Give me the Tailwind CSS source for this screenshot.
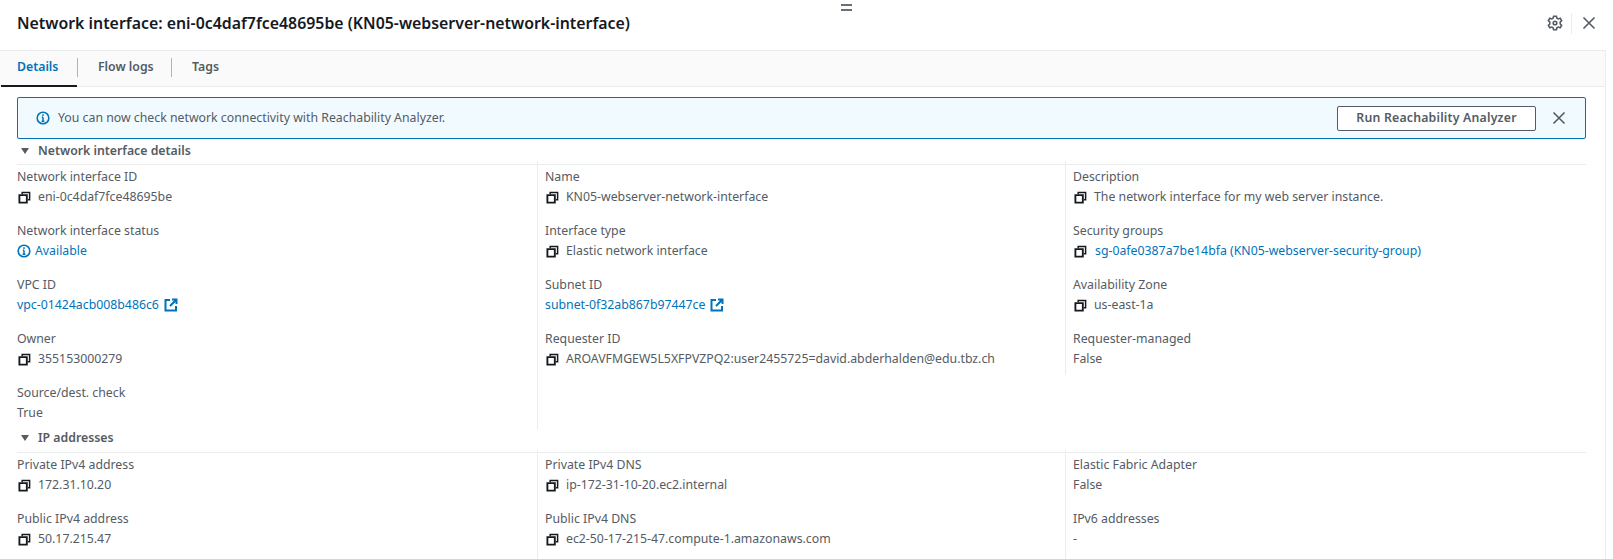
<!DOCTYPE html>
<html lang="en">
<head>
    <meta charset="UTF-8">
    <title>Network interface</title>
    <script src="https://cdn.jsdelivr.net/npm/@tailwindcss/browser@4"></script>
</head>
<body class="bg-white text-[#545b64] font-['Noto_Sans',sans-serif] text-[12.3px] leading-[20px] h-[559px] overflow-hidden">

    <svg class="hidden">
        <symbol id="copy" viewBox="0 0 14 14"><path d="M4.5 3.5V1.5H12.5V9.5H10.5" fill="none" stroke="currentColor" stroke-width="1.6"/><path d="M1.5 4.5H9.5V12.5H1.5Z" fill="none" stroke="currentColor" stroke-width="2"/></symbol>
        <symbol id="external" viewBox="0 0 14 14"><path d="M6 2H1.5V12.5H12V8M8 1.5H12.5V6M12.5 1.5L6 8" fill="none" stroke="currentColor" stroke-width="2"/></symbol>
        <symbol id="info" viewBox="0 0 14 14"><circle cx="7" cy="7" r="5.8" fill="none" stroke="currentColor" stroke-width="1.6"/><path d="M7 6.2V10.2M5.6 10.2H8.4M5.8 6.2H7" fill="none" stroke="currentColor" stroke-width="1.5"/><rect x="6.2" y="3.3" width="1.6" height="1.6" fill="currentColor"/></symbol>
        <symbol id="close" viewBox="0 0 14 14"><path d="M1.5 1.5L12.5 12.5M12.5 1.5L1.5 12.5" fill="none" stroke="currentColor" stroke-width="1.6"/></symbol>
    </svg>

    <header class="relative h-[50px] flex items-center pb-[4px] pl-[17px] pr-[17px]">
        <h1 class="text-[15.87px] font-semibold text-[#16191f]">Network interface: eni-0c4daf7fce48695be (KN05-webserver-network-interface)</h1>
        <span class="absolute left-[841px] top-[4px] w-[11px] h-[7px] border-y-2 border-[#687078]"></span>
        <div class="ml-auto flex items-center">
            <svg class="w-4 h-4 text-[#545b64]" viewBox="0 0 16 16" fill="none" stroke="currentColor" stroke-width="1.6"><path d="M6.6 1.2H9.4L9.9 3.1L11.3 3.9L13.2 3.3L14.6 5.7L13.2 7.1V8.9L14.6 10.3L13.2 12.7L11.3 12.1L9.9 12.9L9.4 14.8H6.6L6.1 12.9L4.7 12.1L2.8 12.7L1.4 10.3L2.8 8.9V7.1L1.4 5.7L2.8 3.3L4.7 3.9L6.1 3.1Z"/><circle cx="8" cy="8" r="1.8"/></svg>
            <span class="w-px h-[21px] bg-[#eaeded] ml-[8px] mr-[10px]"></span>
            <svg class="w-[14px] h-[14px] text-[#545b64]"><use href="#close"/></svg>
        </div>
    </header>

    <nav class="w-[1606px] h-[37px] bg-[#fafafa] border-y border-r border-[#eaeded] flex items-center font-semibold text-[#545b64]">
        <a class="relative h-full flex items-center w-[77px] pl-[17px] pb-[3px] text-[#0073bb]">Details<span class="absolute left-px right-0 -bottom-px h-[2px] bg-[#16191f]"></span></a>
        <span class="w-px h-[19px] mb-[3px] bg-[#aab7b8]"></span>
        <a class="w-[93px] pl-[20px] mb-[3px]">Flow logs</a>
        <span class="w-px h-[19px] mb-[3px] bg-[#aab7b8]"></span>
        <a class="pl-[20px] mb-[3px]">Tags</a>
    </nav>

    <main class="w-[1606px] border-r border-[#eaeded] pl-[17px] pr-[19px] pt-[10px] h-[472px] overflow-hidden">
        <div class="h-[42px] bg-[#f1faff] border border-[#0073bb] rounded-[2px] flex items-center pl-[18px] pr-[19px]">
            <svg class="w-[14px] h-[14px] text-[#0073bb] mr-[8px]"><use href="#info"/></svg>
            <span class="text-[#545b64]">You can now check network connectivity with Reachability Analyzer.</span>
            <button class="ml-auto w-[199px] h-[25px] bg-white border border-[#545b64] rounded-[2px] font-semibold tracking-[0.2px] text-[#545b64]">Run Reachability Analyzer</button>
            <svg class="w-[14px] h-[14px] ml-[16px] text-[#545b64]"><use href="#close"/></svg>
        </div>

        <section>
            <h2 class="h-[26px] pb-[2px] flex items-center border-b border-[#eaeded] font-semibold text-[#545b64]"><span class="w-0 h-0 border-x-[4px] border-x-transparent border-t-[6px] border-t-[#545b64] ml-1 mr-[9px]"></span>Network interface details</h2>
            <div class="grid grid-cols-[521px_528px_1fr] items-start">
                <div class="border-r border-[#eaeded] h-[269px] -mt-[4px] -mb-[3px] pt-[6px]">
                    <div class="h-[54px]"><div>Network interface ID</div><div class="flex items-center"><svg class="w-[13px] h-[13px] ml-px mr-[7px] text-[#16191f]"><use href="#copy"/></svg>eni-0c4daf7fce48695be</div></div>
                    <div class="h-[54px]"><div>Network interface status</div><div class="flex items-center text-[#0073bb]"><svg class="w-[14px] h-[14px] mr-[4px]"><use href="#info"/></svg>Available</div></div>
                    <div class="h-[54px]"><div>VPC ID</div><div class="flex items-center text-[#0073bb]">vpc-01424acb008b486c6<svg class="w-[14px] h-[14px] ml-[5px]"><use href="#external"/></svg></div></div>
                    <div class="h-[54px]"><div>Owner</div><div class="flex items-center"><svg class="w-[13px] h-[13px] ml-px mr-[7px] text-[#16191f]"><use href="#copy"/></svg>355153000279</div></div>
                    <div><div>Source/dest. check</div><div>True</div></div>
                </div>
                <div class="border-r border-[#eaeded] h-[214px] -mt-[4px] pt-[6px] pl-[7px]">
                    <div class="h-[54px]"><div>Name</div><div class="flex items-center"><svg class="w-[13px] h-[13px] ml-px mr-[7px] text-[#16191f]"><use href="#copy"/></svg>KN05-webserver-network-interface</div></div>
                    <div class="h-[54px]"><div>Interface type</div><div class="flex items-center"><svg class="w-[13px] h-[13px] ml-px mr-[7px] text-[#16191f]"><use href="#copy"/></svg>Elastic network interface</div></div>
                    <div class="h-[54px]"><div>Subnet ID</div><div class="flex items-center text-[#0073bb]">subnet-0f32ab867b97447ce<svg class="w-[14px] h-[14px] ml-[5px]"><use href="#external"/></svg></div></div>
                    <div class="h-[54px]"><div>Requester ID</div><div class="flex items-center"><svg class="w-[13px] h-[13px] ml-px mr-[7px] text-[#16191f]"><use href="#copy"/></svg>AROAVFMGEW5L5XFPVZPQ2:user2455725=david.abderhalden@edu.tbz.ch</div></div>
                </div>
                <div class="-mt-[4px] pt-[6px] pl-[7px]">
                    <div class="h-[54px]"><div>Description</div><div class="flex items-center"><svg class="w-[13px] h-[13px] ml-px mr-[7px] text-[#16191f]"><use href="#copy"/></svg>The network interface for my web server instance.</div></div>
                    <div class="h-[54px]"><div>Security groups</div><div class="flex items-center text-[#0073bb]"><svg class="w-[13px] h-[13px] ml-px mr-[8px] text-[#16191f]"><use href="#copy"/></svg>sg-0afe0387a7be14bfa (KN05-webserver-security-group)</div></div>
                    <div class="h-[54px]"><div>Availability Zone</div><div class="flex items-center"><svg class="w-[13px] h-[13px] ml-px mr-[7px] text-[#16191f]"><use href="#copy"/></svg>us-east-1a</div></div>
                    <div class="h-[54px]"><div>Requester-managed</div><div>False</div></div>
                </div>
            </div>
        </section>

        <section>
            <h2 class="h-[26px] pb-[3px] flex items-center border-b border-[#eaeded] font-semibold text-[#545b64]"><span class="w-0 h-0 border-x-[4px] border-x-transparent border-t-[6px] border-t-[#545b64] ml-1 mr-[9px]"></span>IP addresses</h2>
            <div class="grid grid-cols-[521px_528px_1fr] items-start">
                <div class="border-r border-[#eaeded] h-[113px] -mt-[3px] pt-[5px]">
                    <div class="h-[54px]"><div>Private IPv4 address</div><div class="flex items-center"><svg class="w-[13px] h-[13px] ml-px mr-[7px] text-[#16191f]"><use href="#copy"/></svg>172.31.10.20</div></div>
                    <div class="h-[54px]"><div>Public IPv4 address</div><div class="flex items-center"><svg class="w-[13px] h-[13px] ml-px mr-[7px] text-[#16191f]"><use href="#copy"/></svg>50.17.215.47</div></div>
                </div>
                <div class="border-r border-[#eaeded] h-[113px] -mt-[3px] pt-[5px] pl-[7px]">
                    <div class="h-[54px]"><div>Private IPv4 DNS</div><div class="flex items-center"><svg class="w-[13px] h-[13px] ml-px mr-[7px] text-[#16191f]"><use href="#copy"/></svg>ip-172-31-10-20.ec2.internal</div></div>
                    <div class="h-[54px]"><div>Public IPv4 DNS</div><div class="flex items-center"><svg class="w-[13px] h-[13px] ml-px mr-[7px] text-[#16191f]"><use href="#copy"/></svg>ec2-50-17-215-47.compute-1.amazonaws.com</div></div>
                </div>
                <div class="-mt-[3px] pt-[5px] pl-[7px]">
                    <div class="h-[54px]"><div>Elastic Fabric Adapter</div><div>False</div></div>
                    <div class="h-[54px]"><div>IPv6 addresses</div><div>-</div></div>
                </div>
            </div>
        </section>
    </main>
</body>
</html>
